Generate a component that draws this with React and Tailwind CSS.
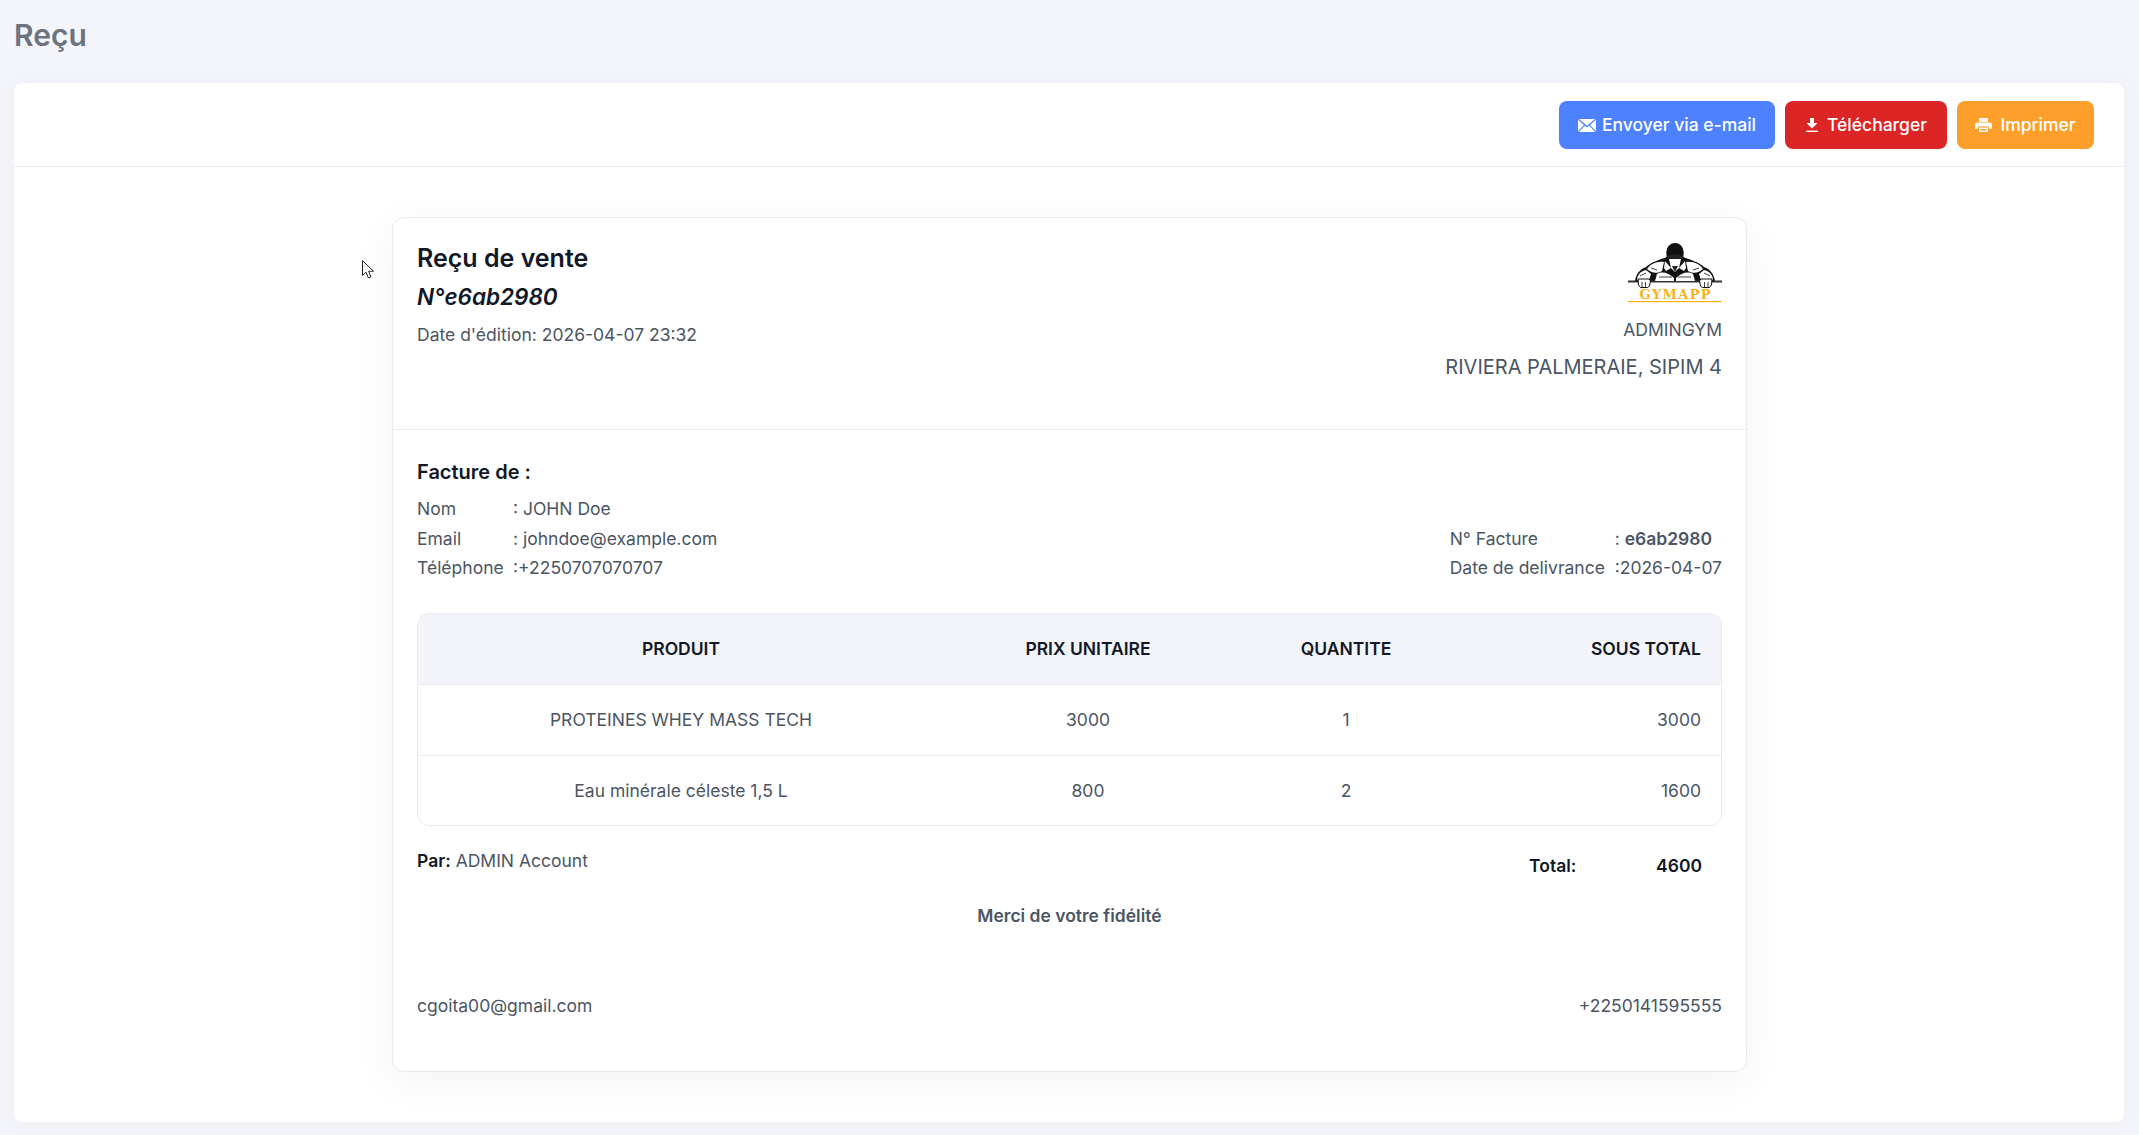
// cellules de la fiche client / facture
function InfoRow({ label, value, labelClass = "w-[96px]" }) {
  return (
    <div className="flex h-[29.5px] items-center">
      <span className={`${labelClass} shrink-0`}>{label}</span>
      <span>{value}</span>
    </div>
  );
}

function MailIcon() {
  return (
    <svg viewBox="0 0 18 13" className="h-[13px] w-[18px] shrink-0" fill="currentColor">
      <path d="M1 0h16L9 6.800z" />
      <path d="M0 .8V12.200L6 6zM18 .8V12.200L12 6z" />
      <path d="M6.800 6.700L9 8.600l2.200-1.900L17.200 13H.8z" />
    </svg>
  );
}

function DownloadIcon() {
  return (
    <svg viewBox="0 0 12 14" className="h-[14px] w-[12px] shrink-0" fill="currentColor">
      <path d="M4 0h4v5h3.500L6 10.500.5 5H4z" />
      <rect x="0" y="12.600" width="12" height="1.400" />
    </svg>
  );
}

function PrintIcon() {
  return (
    <svg viewBox="0 0 17 14" className="h-[14px] w-[17px] shrink-0" fill="currentColor">
      <path d="M4 0h9v3.800H4z" />
      <path d="M1.500 4.500h14a1.500 1.500 0 0 1 1.500 1.500v5h-3V8.500H3V11H0V6a1.500 1.500 0 0 1 1.500-1.500z" />
      <path fillRule="evenodd" d="M4 9.500h9V14H4zM5.500 11v1.500h6V11z" />
    </svg>
  );
}

// moitié gauche du personnage, reprise en miroir pour la droite
function LogoHalf() {
  return (
    <>
      <path d="M19 26c3-5 10-8 17-7l-2 9c-5 3-11 2-15-2z" fill="#fff" />
      <path d="M9 37c0-5 4-9 9-10l5 4-2 6z" fill="#fff" />
      <path d="M29 31c5-3 12-1 17 4v3H27z" fill="#fff" />
      <path d="M37 18l6 7-5 3-2-3z" fill="#fff" />
      <path d="M23 25l6 2M12 33l6-3M31 34h13" stroke="#111" strokeWidth="0.800" />
      <path d="M10 36h11l1.500 2-1 5-2 1.500h-7L10.500 42z" fill="#fff" stroke="#111" strokeWidth="1" />
      <path d="M14 39v5M17.500 39v5" stroke="#111" strokeWidth="0.800" />
    </>
  );
}

function Logo() {
  return (
    <svg viewBox="0 0 94 60" className="h-[60px] w-[94px]">
      {/* silhouette */}
      <path d="M39 14C30 17 22 20 18 24 12 26 8 31 7 38H87C86 31 82 26 76 24 72 20 64 17 55 14z" fill="#111" />
      <rect x="0" y="37.500" width="94" height="2" fill="#333" />
      <LogoHalf />
      <g transform="matrix(-1 0 0 1 94 0)">
        <LogoHalf />
      </g>
      {/* tête */}
      <circle cx="47" cy="8.500" r="8.500" fill="#111" />
      <rect x="38.500" y="8.500" width="17" height="7" fill="#111" />
      <path d="M41 16h12l-2 9-4 4-4-4z" fill="#fff" />
      <path d="M44 23h6l-3 6zM39 13c5-2 11-2 16 0v2.500H39z" fill="#222" />
      <path d="M47 30v8" stroke="#111" strokeWidth="1.200" />
      <text x="47" y="55.500" textAnchor="middle" fontFamily="'DejaVu Serif', serif" fontSize="13" fontWeight="700" fill="#fbb016" textLength="71" lengthAdjust="spacing">GYMAPP</text>
      <rect x="0" y="58" width="94" height="1.200" fill="#fbb016" />
    </svg>
  );
}

function Cursor() {
  return (
    <svg viewBox="0 0 13 20" className="pointer-events-none absolute left-[362px] top-[260px] h-[20px] w-[13px]" fill="#fff" stroke="#222" strokeWidth="1">
      <path d="M.5.700v14.800l3.500-3.300 2.400 5.700 2.600-1.100-2.400-5.600h5z" />
    </svg>
  );
}

const rows = [
  { name: "PROTEINES WHEY MASS TECH", price: "3000", qty: "1", total: "3000", rowClass: "h-[71px] border-b border-[#eceef2]" },
  { name: "Eau minérale céleste 1,5 L", price: "800", qty: "2", total: "1600", rowClass: "h-[69px] pt-[2px]" },
];

export default function App() {
  return (
    <div className="relative h-[1135px] overflow-hidden bg-[#f4f5fa] font-['Inter',sans-serif] text-[17.5px] text-[#4b5563]">
      <Cursor />
      <div className="flex h-[83px] items-start px-[14px] pt-[16px]">
        <h1 className="text-[30px] leading-[38px] font-semibold text-[#6b7280]">Reçu</h1>
      </div>

      <div className="mx-[14px] h-[1039px] w-[2110px] rounded-[8px] bg-white shadow-[0_0_30px_rgba(17,24,39,0.03)]">
        <div className="flex h-[84px] items-center justify-end gap-[10px] border-b border-[#e8eaee] pt-[1px] pr-[30px]">
          <button type="button" className="flex h-[48px] w-[216px] items-center justify-center gap-[6px] rounded-[8px] bg-[#4d81ff] font-medium text-white">
            <MailIcon />
            Envoyer via e-mail
          </button>
          <button type="button" className="flex h-[48px] w-[162px] items-center justify-center gap-[9px] rounded-[8px] bg-[#dc2626] pl-[1px] font-medium text-white">
            <DownloadIcon />
            Télécharger
          </button>
          <button type="button" className="flex h-[48px] w-[137px] items-center justify-center gap-[8px] rounded-[8px] bg-[#ff9f2b] font-medium text-white">
            <PrintIcon />
            Imprimer
          </button>
        </div>

        <div className="ml-[378px] mt-[50px] h-[855px] w-[1355px] rounded-[12px] border border-[#e9ebef] bg-white shadow-[0_10px_40px_rgba(17,24,39,0.05)]">
          <div className="flex h-[212px] justify-between border-b border-[#e8eaee] px-[24px] pt-[24px]">
            <div>
              <h2 className="text-[25px] leading-[32px] font-semibold text-[#111827]">Reçu de vente</h2>
              <p className="mt-[7px] text-[22.500px] leading-[32px] font-semibold text-[#111827] italic">N°e6ab2980</p>
              <p className="mt-[9px] leading-[26px]">Date d'édition: 2026-04-07 23:32</p>
            </div>
            <div className="mt-[1px] flex flex-col items-end">
              <Logo />
              <p className="mt-[14px] leading-[26px]">ADMINGYM</p>
              <p className="mt-[10px] text-[20px] leading-[28px]">RIVIERA PALMERAIE, SIPIM 4</p>
            </div>
          </div>

          <div className="px-[24px] pt-[28px]">
            <h3 className="text-[20px] leading-[28px] font-semibold text-[#111827]">Facture de :</h3>
            <div className="mt-[8.500px] flex items-end justify-between">
              <div>
                <InfoRow label="Nom" value=": JOHN Doe" />
                <InfoRow label="Email" value=": johndoe@example.com" />
                <InfoRow label="Téléphone" value=":+2250707070707" />
              </div>
              <div>
                <InfoRow label="N° Facture" value={<>: <b className="font-semibold">e6ab2980</b></>} labelClass="w-[165px]" />
                <InfoRow label="Date de delivrance" value=":2026-04-07" labelClass="w-[165px]" />
              </div>
            </div>

            <div className="mt-[30px] overflow-hidden rounded-[12px] border border-[#e9ebef]">
              <div className="grid h-[71px] grid-cols-[526px_288px_228px_1fr] items-center border-b border-[#e8eaee] bg-[#f3f4f9] font-semibold text-[#111827]">
                <span className="text-center">PRODUIT</span>
                <span className="text-center">PRIX UNITAIRE</span>
                <span className="text-center">QUANTITE</span>
                <span className="pr-[20px] text-right">SOUS TOTAL</span>
              </div>
              {rows.map((row) => (
                <div key={row.name} className={`grid grid-cols-[526px_288px_228px_1fr] items-center ${row.rowClass}`}>
                  <span className="text-center">{row.name}</span>
                  <span className="text-center">{row.price}</span>
                  <span className="text-center">{row.qty}</span>
                  <span className="pr-[20px] text-right">{row.total}</span>
                </div>
              ))}
            </div>

            <div className="mt-[22px] flex items-start justify-between">
              <p className="leading-[26px]"><b className="font-semibold text-[#111827]">Par:</b> ADMIN Account</p>
              <div className="mt-[5px] flex pr-[20px] font-semibold text-[#111827]">
                <span className="w-[127px]">Total:</span>
                <span>4600</span>
              </div>
            </div>

            <p className="mt-[24px] text-center leading-[26px] font-semibold">Merci de votre fidélité</p>

            <div className="mt-[64px] flex justify-between leading-[26px]">
              <span>cgoita00@gmail.com</span>
              <span>+2250141595555</span>
            </div>
          </div>
        </div>
      </div>
    </div>
  );
}
